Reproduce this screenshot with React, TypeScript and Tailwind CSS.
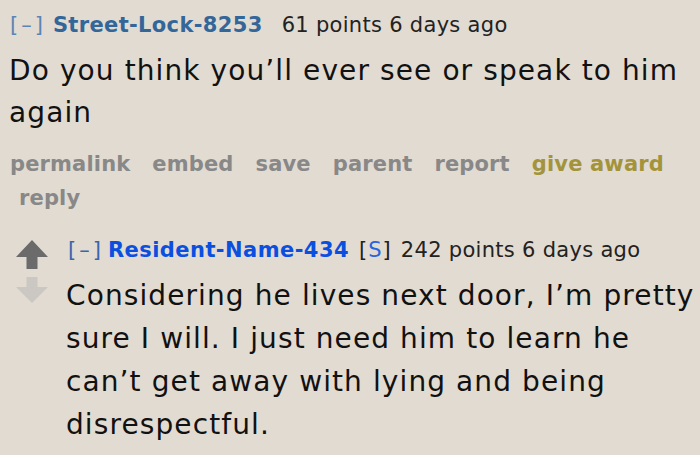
import React from "react";

function UpArrow() {
  return (
    <svg width="32" height="29" viewBox="0 0 32 29" className="block">
      <path d="M16 0 L32 17 L21.5 17 L21.5 29 L10.5 29 L10.5 17 L0 17 Z" fill="#6b6b6b" />
    </svg>
  );
}

function DownArrow() {
  return (
    <svg width="32" height="26" viewBox="0 0 32 26" className="block">
      <path d="M10.5 0 L21.5 0 L21.5 10 L32 10 L16 26 L0 10 L10.5 10 Z" fill="#cbc8c3" />
    </svg>
  );
}

export default function App() {
  return (
    <div className="w-[700px] h-[455px] overflow-hidden bg-[#e2dbd1] font-['DejaVu_Sans','Liberation_Sans',sans-serif]">
      {/* Comment 1 */}
      <div className="pl-[10px] pt-[13px]">
        <div className="flex items-baseline text-[21px] leading-[24px] whitespace-nowrap">
          <span className="text-[#5b85b5] tracking-[3px]">[–]</span>
          <span className="ml-[7px] font-bold text-[#336699] tracking-[0.35px]">Street-Lock-8253</span>
          <span className="ml-[19px] text-[#222] tracking-[0.3px]">61 points 6 days ago</span>
        </div>
        <div className="mt-[13px] text-[28px] leading-[42px] text-[#111] tracking-[1.1px] -ml-[1px]">
          <div className="whitespace-nowrap">Do you think you’ll ever see or speak to him</div>
          <div className="whitespace-nowrap">again</div>
        </div>
        <div className="mt-[13px] text-[21px] leading-[34px] font-bold tracking-[0.15px]">
          <div className="flex gap-[22px] whitespace-nowrap">
            <span className="text-[#888888]">permalink</span>
            <span className="text-[#888888]">embed</span>
            <span className="text-[#888888]">save</span>
            <span className="text-[#888888]">parent</span>
            <span className="text-[#888888]">report</span>
            <span className="text-[#a3933a]">give award</span>
          </div>
          <div className="pl-[9px] text-[#888888]">reply</div>
        </div>
      </div>

      {/* Comment 2 */}
      <div className="flex mt-[23px] pl-[16px]">
        <div className="flex flex-col w-[32px] pt-[2px] gap-[8px]">
          <UpArrow />
          <DownArrow />
        </div>
        <div className="ml-[18px]">
          <div className="flex items-baseline text-[21px] leading-[24px] whitespace-nowrap pl-[2px]">
            <span className="text-[#3a66ad] tracking-[3px]">[–]</span>
            <span className="ml-[4px] font-bold text-[#0b4fe0] tracking-[0.45px]">Resident-Name-434</span>
            <span className="ml-[10px] text-[#222] tracking-[1px]">
              [<span className="text-[#2a63e0]">S</span>]
            </span>
            <span className="ml-[9px] text-[#222] tracking-[0.3px]">242 points 6 days ago</span>
          </div>
          <div className="mt-[12px] text-[28px] leading-[43px] text-[#111] tracking-[1.1px]">
            <div className="whitespace-nowrap">Considering he lives next door, I’m pretty</div>
            <div className="whitespace-nowrap">sure I will. I just need him to learn he</div>
            <div className="whitespace-nowrap">can’t get away with lying and being</div>
            <div className="whitespace-nowrap">disrespectful.</div>
          </div>
        </div>
      </div>
    </div>
  );
}
